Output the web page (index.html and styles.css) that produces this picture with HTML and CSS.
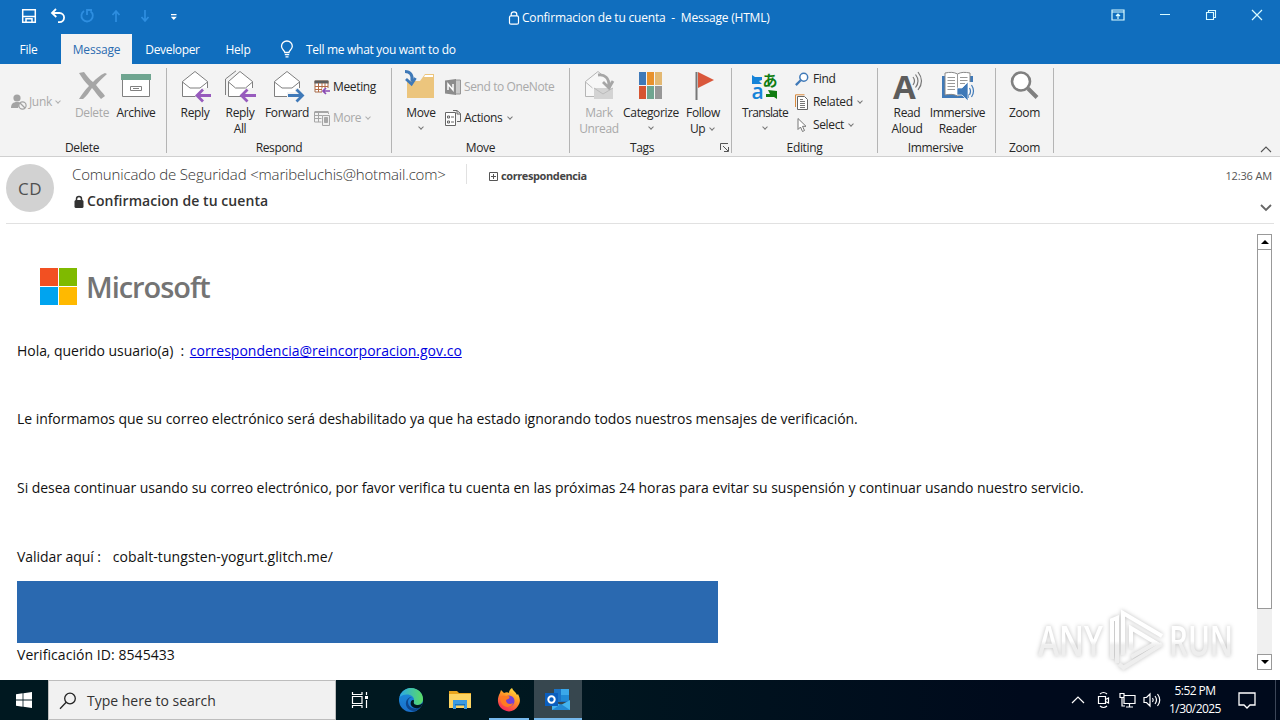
FILE: index.html
```html
<!DOCTYPE html>
<html lang="es">
<head>
<meta charset="utf-8">
<title>Confirmacion de tu cuenta - Message (HTML)</title>
<link rel="stylesheet" href="styles.css">
</head>
<body>
<header class="titlebar">
  <div class="quick">
    <svg viewBox="0 0 16 16" width="16" height="16" fill="none" stroke="#fff" stroke-width="1.5"><path d="M1.700 1.700h12.600v12.600H1.700zM1.700 8.500h12.600M5 14v-3.300h6V14"/></svg>
    <svg viewBox="0 0 16 16" width="16" height="16" fill="none" stroke="#fff" stroke-width="1.8"><path d="M6 1L2 5l4.300 4M2 5h7.500a4.600 4.600 0 1 1 0 9.200H8"/></svg>
    <svg viewBox="0 0 16 16" width="16" height="16" fill="none" stroke="#2e8ee0" stroke-width="1.800"><path d="M5 3a5.700 5.700 0 1 0 6.500.2M8 7V2h5"/></svg>
    <svg viewBox="0 0 16 16" width="16" height="16" fill="none" stroke="#2e8ee0" stroke-width="1.7"><path d="M8 14V3M4.500 7L8 3l3.500 4"/></svg>
    <svg viewBox="0 0 16 16" width="16" height="16" fill="none" stroke="#2e8ee0" stroke-width="1.7"><path d="M8 2v11M4.500 9L8 13l3.500-4"/></svg>
    <svg viewBox="0 0 16 16" width="16" height="16"><path d="M5 6h5.500v1.200H5zM4.800 8.800h6L7.800 12z" fill="#fff"/></svg>
  </div>
  <div class="caption">
    <svg viewBox="0 0 12 14" width="12" height="14" fill="none" stroke="#fff" stroke-width="1.200"><path d="M3.200 5V3.500a2.800 2.600 0 0 1 5.600 0V5"/><rect x="1.500" y="4.800" width="9" height="8.400" rx="1.500"/></svg><span>Confirmacion de tu cuenta&nbsp; -&nbsp; Message (HTML)</span>
  </div>
  <div class="winbtns">
    <svg viewBox="0 0 14 12" width="14" height="12" fill="none" stroke="#d9fbff" stroke-width="1.200"><path d="M1 1h12v10H1zM1 3h12M7 10V5M5 7l2-2 2 2"/></svg>
    <svg viewBox="0 0 12 12" width="12" height="12" stroke="#d9fbff"><path d="M1 5.500h10"/></svg>
    <svg viewBox="0 0 12 12" width="12" height="12" fill="none" stroke="#d9fbff" stroke-width="1.100"><path d="M1.500 3.500h7v7h-7zM3.500 3.500V1.500h7v7h-2"/></svg>
    <svg viewBox="0 0 12 12" width="12" height="12" fill="none" stroke="#d9fbff" stroke-width="1.200"><path d="M1 1l10 10M11 1L1 11"/></svg>
  </div>
</header>

<nav class="tabs">
  <a class="tab file">File</a>
  <a class="tab active">Message</a>
  <a class="tab dev">Developer</a>
  <a class="tab help">Help</a>
  <a class="tell">
    <svg viewBox="0 0 14 18" width="14" height="18" fill="none" stroke="#fff" stroke-width="1.300"><path d="M4.800 12.500c0-2-3.300-2.900-3.300-6.200a5.400 5.300 0 0 1 10.800 0c0 3.300-3.300 4.200-3.300 6.200zM4.800 14.700h4.400M5.500 16.800h3"/></svg>
    <span>Tell me what you want to do</span>
  </a>
</nav>

<section class="ribbon">
  <div class="group g-delete">
    <div class="tools">
      <div class="stack junk"><span class="row off">
        <svg viewBox="0 0 16 16" width="16" height="16"><circle cx="6" cy="4" r="3.600" fill="#a3a3a3"/><path d="M0 14c0-4 2-6 6-6 2 0 3 .5 3.500 1L7 14z" fill="#a3a3a3"/><circle cx="11.500" cy="11.500" r="3.600" fill="#f3f3f3" stroke="#a3a3a3" stroke-width="1.200"/><path d="M9 9l5 5" stroke="#a3a3a3" stroke-width="1.200"/></svg>
        Junk <i class="chev"></i></span></div>
      <div class="tool off w-del"><svg viewBox="0 0 32 32" width="32" height="32" fill="#a6a6a6"><path d="M3 3l5-1c3 4 6 8 9 10 3-3 7-7 12-9l2 1c-4 4-8 7-11 11 3 4 7 8 9 11l-4 3c-4-4-6-8-9-11-3 4-5 8-9 11H3c3-5 6-9 10-13C9 12 6 8 3 3z"/></svg><span>Delete</span></div>
      <div class="tool w-arc"><svg viewBox="0 0 32 32" width="32" height="32"><path d="M2.500 9h27v17.500h-27z" fill="#fff" stroke="#808080"/><path d="M1 4h30v6H1z" fill="#6fa590"/><path d="M10.500 16.500h11v4h-11zM13 18.500h6" fill="none" stroke="#808080"/></svg><span>Archive</span></div>
    </div>
    <div class="glabel">Delete</div>
  </div>

  <div class="group g-respond">
    <div class="tools">
      <div class="tool w-rep"><svg viewBox="0 0 32 32" width="32" height="32"><path d="M3.500 11.500L16 1.500l12.500 10v15h-25z" fill="#fff" stroke="#7f7f7f"/><path d="M3.500 12l7.500 6h10l7.500-6" fill="none" stroke="#7f7f7f"/><path d="M16 26.500L23 21v-3h8v12h-8z" fill="#f3f3f3"/><path d="M32 25.500H18.500M24 19.500l-6 6 6 6" fill="none" stroke="#975bbd" stroke-width="2.800"/></svg><span>Reply</span></div>
      <div class="tool w-all"><svg viewBox="0 0 32 32" width="32" height="32"><path d="M1.500 25V9L12 .8" fill="none" stroke="#7f7f7f"/><path d="M4.500 11.500L16 1.500l12.500 10v15h-24z" fill="#fff" stroke="#7f7f7f"/><path d="M4.500 12l7 6h10l7-6" fill="none" stroke="#7f7f7f"/><path d="M17 26.500L22 21v-3h9v12h-9z" fill="#f3f3f3"/><path d="M32 25.500H18M23.500 19.500l-6 6 6 6" fill="none" stroke="#975bbd" stroke-width="2.800"/></svg><span>Reply<br>All</span></div>
      <div class="tool w-fwd"><svg viewBox="0 0 32 32" width="32" height="32"><path d="M3.500 11.500L16 1.500l12.500 10v15h-25z" fill="#fff" stroke="#7f7f7f"/><path d="M3.500 12l7.500 6h10l7.500-6" fill="none" stroke="#7f7f7f"/><path d="M16 22h8v-4h7v12h-8l-1-2h-6z" fill="#f3f3f3"/><path d="M17 25.500h14M25.500 19.500l6 6-6 6" fill="none" stroke="#3f79b8" stroke-width="2.800"/></svg><span>Forward</span></div>
      <div class="stack wide">
        <span class="row"><svg viewBox="0 0 16 16" width="16" height="16"><path d="M1 2h13v11H1z" fill="#fff" stroke="#a66a48"/><path d="M.5 1.500h14v3H.5z" fill="#5c5c5c"/><path d="M1 7.500h13M1 10.500h8M4.500 4v9M8 4v9M11 4v5" stroke="#b56b45"/><path d="M8 9h8v6H8z" fill="#f3f3f3"/><path d="M16 12H9.500M12 9l-3 3 3 3" fill="none" stroke="#8949b3" stroke-width="1.700"/></svg>Meeting</span>
        <span class="row off"><svg viewBox="0 0 16 16" width="16" height="16" fill="none" stroke="#a6a6a6"><path d="M.5 2.500h14V4M.5 2v10h7M.5 5.500h8M.5 8.500h7M4.500 3v9M.5 1.500h14" /><path d="M8.500 5.500h7v10h-7z" fill="#eee"/><path d="M10.500 7.500h3v5h-3z" fill="#a6a6a6"/></svg>More <i class="chev"></i></span>
      </div>
    </div>
    <div class="glabel">Respond</div>
  </div>

  <div class="group g-move">
    <div class="tools">
      <div class="tool w-move"><svg viewBox="0 0 32 32" width="32" height="32"><path d="M2 11h13l5-7h9v24H2z" fill="#ecc57d"/><path d="M20 5h8v2h-9z" fill="#fff"/><path d="M0 1.500c5 0 8 3 7 10" fill="none" stroke="#3f79b8" stroke-width="3"/><path d="M1 9l5.500 5 4-6" fill="none" stroke="#3f79b8" stroke-width="2.800"/></svg><span>Move<i class="chev below"></i></span></div>
      <div class="stack wide">
        <span class="row off"><svg viewBox="0 0 16 16" width="16" height="16"><path d="M10 1h5.500v14H10z" fill="#c9c9c9" stroke="#969696"/><path d="M0 1.500L11 0v16L0 14.500z" fill="#8c8c8c"/><path d="M3 11V5l5 6V5" fill="none" stroke="#fff" stroke-width="1.500"/></svg><span class="onenote">Send to OneNote</span></span>
        <span class="row"><svg viewBox="0 0 16 16" width="16" height="16" fill="none" stroke="#666"><path d="M.5 2.500h10v13H.5z" fill="#fff"/><path d="M2.500 6h2v2h-2zM2.500 11h2v2h-2zM6 7h3M6 12h3M8 .5h4l3.500 3v8H12"/><path d="M12 1v3h3"/></svg>Actions <i class="chev"></i></span>
      </div>
    </div>
    <div class="glabel">Move</div>
  </div>

  <div class="group g-tags">
    <div class="tools">
      <div class="tool off w-mark"><svg viewBox="0 0 32 32" width="32" height="32"><path d="M2.500 11.500L15 1.500l12 10v15h-24.500z" fill="#f7f7f7" stroke="#b5b5b5"/><path d="M11 18h19v11H11z" fill="#d3d3d3"/><path d="M2.500 12l7 6M11 18l9 6 10-6" fill="none" stroke="#bbb"/><path d="M15 5c7-1 11 3 11 11M20 12l6 6 4-7" fill="none" stroke="#a6a6a6" stroke-width="2.800"/></svg><span>Mark<br>Unread</span></div>
      <div class="tool w-cat"><svg viewBox="0 0 32 32" width="32" height="32"><path d="M4 2h7v13H4z" fill="#3f79b8"/><path d="M12 2h7v13h-7z" fill="#e8912d"/><path d="M20 2h7v13h-7z" fill="#e3b872"/><path d="M4 16h7v13H4z" fill="#d65532"/><path d="M12 16h7v13h-7z" fill="#6fa590"/><path d="M20 16h7v13h-7z" fill="#979797"/></svg><span>Categorize<i class="chev below"></i></span></div>
      <div class="tool w-flw"><svg viewBox="0 0 32 32" width="32" height="32"><path d="M9.500 2v28" stroke="#777" stroke-width="2"/><path d="M11 2l16 8-16 8z" fill="#d9573b"/></svg><span>Follow<br>Up <i class="chev"></i></span></div>
    </div>
    <div class="glabel">Tags</div>
    <svg class="launcher" viewBox="0 0 9 9" width="9" height="9" fill="none" stroke="#555"><path d="M.5 7V.5H8M3 3l5 5M8.500 4v4.500H4"/></svg>
  </div>

  <div class="group g-edit">
    <div class="tools">
      <div class="tool w-tr"><svg viewBox="0 0 32 32" width="32" height="32"><path d="M3 5l3 2h7v3l-3 1 3 3H3z" fill="#1583d8"/><path d="M28 29l-3-2h-8v-3h4l-2-4 9 1z" fill="#107c10"/><text x="2.500" y="29" class="ico-a">a</text><text x="13.500" y="15.500" class="ico-jp">あ</text></svg><span>Translate<i class="chev below"></i></span></div>
      <div class="stack tight">
        <span class="row"><svg viewBox="0 0 16 16" width="14" height="14" fill="none" stroke="#3f79b8"><circle cx="10" cy="6" r="4.500" stroke-width="1.700" fill="#fff"/><path d="M6.500 9.500L1 15" stroke-width="2.600"/></svg>Find</span>
        <span class="row"><svg viewBox="0 0 14 16" width="14" height="16" fill="none"><path d="M.5 13V.8h9" stroke="#d98a3c"/><path d="M2.500 2.500h7l3 3v10h-10z" fill="#fff" stroke="#666"/><path d="M5 7.500h5M5 9.500h5M5 11.500h5M5 13.500h5M5 5.500h3" stroke="#666" stroke-width=".9"/></svg>Related <i class="chev"></i></span>
        <span class="row"><svg viewBox="0 0 14 16" width="14" height="16"><path d="M3 1.500v11l2.500-2.500 2 4.500 2-1-2-4.200H11z" fill="#fff" stroke="#777"/></svg>Select <i class="chev"></i></span>
      </div>
    </div>
    <div class="glabel">Editing</div>
  </div>

  <div class="group g-imm">
    <div class="tools">
      <div class="tool w-read"><svg viewBox="0 0 32 32" width="32" height="32"><text x="2" y="29" class="ico-read">A</text><path d="M22 7q3 4 0 8M24.500 4.500q5 6.500 0 13M27 2q7 9 0 18" fill="none" stroke="#777" stroke-width="1.200"/></svg><span>Read<br>Aloud</span></div>
      <div class="tool w-immr"><svg viewBox="0 0 32 32" width="32" height="32"><path d="M0 6h31v22H0z" fill="#3f79b8"/><path d="M3 3c5-1 9-1 12.500 1C19 2 23 2 28 3v22c-5-1-9-1-12.500 1C12 24 8 24 3 25z" fill="#fff" stroke="#888"/><path d="M15.500 4v22M5.500 7.500H13M5.500 10.500H13M5.500 13.500H13M5.500 16.500H13M5.500 19.500H13M18 7.500h7.500M18 10.500h7.500M18 13.500h5" stroke="#999" fill="none"/><path d="M27 12h5v18h-5z" fill="#f3f3f3"/><path d="M15 18h5l6-6v19l-6-6h-5z" fill="#3f79b8" stroke="#fff" stroke-width=".7"/><path d="M27.500 18q2 3 0 7M29.500 15q4 6 0 12" fill="none" stroke="#3f79b8" stroke-width="1.200"/></svg><span>Immersive<br>Reader</span></div>
    </div>
    <div class="glabel imml">Immersive</div>
  </div>

  <div class="group g-zoom">
    <div class="tools">
      <div class="tool w-zoom"><svg viewBox="0 0 32 32" width="32" height="32"><circle cx="12" cy="11.500" r="9" fill="#fff" stroke="#808080" stroke-width="2.600"/><path d="M19 18.500l9 9" stroke="#808080" stroke-width="4"/></svg><span>Zoom</span></div>
    </div>
    <div class="glabel">Zoom</div>
  </div>
  <svg class="collapse" viewBox="0 0 12 7" width="12" height="7" fill="none" stroke="#555" stroke-width="1.100"><path d="M1 6l5-5 5 5"/></svg>
</section>

<section class="msghead">
  <div class="avatar">CD</div>
  <div class="who">
    <div class="fromline"><span class="from">Comunicado de Seguridad &lt;maribeluchis@hotmail.com&gt;</span>
      <span class="to"><svg viewBox="0 0 9 9" width="9" height="9" fill="none" stroke="#555"><path d="M.5.5h8v8h-8zM2 4.500h5M4.500 2v5"/></svg>correspondencia</span></div>
    <div class="subject"><svg viewBox="0 0 10 13" width="10" height="13"><path d="M2.500 6V4a2.500 2.500 0 0 1 5 0v2" fill="none" stroke="#333" stroke-width="1.500"/><rect x=".5" y="5" width="9" height="8" rx="1.500" fill="#333"/></svg>Confirmacion de tu cuenta</div>
  </div>
  <div class="when"><span>12:36 AM</span><svg viewBox="0 0 12 8" width="12" height="8" fill="none" stroke="#666" stroke-width="1.800"><path d="M1 1l5 5 5-5"/></svg></div>
</section>

<main class="reader">
  <article class="mail">
    <div class="brand">
      <div class="tiles"><i class="t1"></i><i class="t2"></i><i class="t3"></i><i class="t4"></i></div>
      <span>Microsoft</span>
    </div>
    <p class="p1">Hola, querido usuario(a)&nbsp; : <a>correspondencia@reincorporacion.gov.co</a></p>
    <p class="p2">Le informamos que su correo electrónico será deshabilitado ya que ha estado ignorando todos nuestros mensajes de verificación.</p>
    <p class="p3">Si desea continuar usando su correo electrónico, por favor verifica tu cuenta en las próximas 24 horas para evitar su suspensión y continuar usando nuestro servicio.</p>
    <p class="p4">Validar aquí :&nbsp;&nbsp; <span>cobalt-tungsten-yogurt.glitch.me/</span></p>
    <div class="block"></div>
    <p class="vid">Verificación ID: 8545433</p>
  </article>
  <div class="scroll">
    <div class="sbtn"><svg viewBox="0 0 8 4" width="8" height="4"><path d="M0 4l4-4 4 4z"/></svg></div>
    <div class="thumb"></div>
    <div class="sbtn end"><svg viewBox="0 0 8 4" width="8" height="4"><path d="M0 0l4 4 4-4z"/></svg></div>
  </div>
  <svg class="watermark" viewBox="0 0 204 74" width="204" height="74">
    <defs><linearGradient id="wg" x1="0" y1="10" x2="0" y2="62" gradientUnits="userSpaceOnUse"><stop offset=".48" stop-color="#fff"/><stop offset=".56" stop-color="#eeeeee"/></linearGradient></defs>
    <g class="wm">
      <text x="6" y="50" textLength="65" lengthAdjust="spacingAndGlyphs" fill="url(#wg)">ANY</text>
      <text x="137" y="50" textLength="64" lengthAdjust="spacingAndGlyphs" fill="url(#wg)">RUN</text>
      <path stroke="url(#wg)" d="M80 53V14l5-2v45M91 49V7l39 23M99 43V22l25 15-25 14M91 62l39-24M87 58l6 5"/>
    </g>
  </svg>
</main>

<footer class="taskbar">
  <div class="start"><svg viewBox="0 0 16 16" width="16" height="16" fill="#fff"><path d="M0 2.200l6.600-.9v6.300H0zM7.400 1.200L16 0v7.600H7.400zM0 8.400h6.600v6.300L0 13.800zM7.400 8.400H16V16l-8.600-1.200z"/></svg></div>
  <div class="search"><svg viewBox="0 0 18 18" width="18" height="18" fill="none" stroke="#222" stroke-width="1.300"><circle cx="11" cy="6.500" r="5.300"/><path d="M7.200 10.300L1 16.700"/></svg><span>Type here to search</span></div>
  <div class="app"><svg viewBox="0 0 18 18" width="18" height="18" fill="none" stroke="#fff" stroke-width="1.200"><path d="M1.500 1v2.500h9.500V1M1.500 17v-2.500h9.500V17M1.500 5.500H11v7H1.500zM15.500 1v3M15.500 9v8"/><path d="M14 5h3v3h-3z" fill="#fff" stroke="none"/></svg></div>
  <div class="app edge"><svg viewBox="0 0 24 24" width="24" height="24">
    <defs><linearGradient id="eg" x1="0" x2="1"><stop offset="0" stop-color="#2aa8e8"/><stop offset="1" stop-color="#5bdc63"/></linearGradient><linearGradient id="eb" x1="0" y1="0" x2="0" y2="1"><stop offset="0" stop-color="#1b8fdc"/><stop offset="1" stop-color="#1a6fcb"/></linearGradient></defs>
    <circle cx="12" cy="12" r="12" fill="url(#eb)"/><path d="M.5 9C3 2 8 0 12 0c7 0 12 5 12 11 0 4-3 6-6 6-4 0-4-2-3-4 1-6-8-9-14.500-4z" fill="url(#eg)"/><path d="M13 9c-4 1-5 5-3 8.500 2 3 6 4 11 2-1 1-3 3-5 3.800C10 23 6 19 7 14c.5-3 3-5 6-5z" fill="#0d478f"/><path d="M15 13c-1 3 1 4 4 4 2 0 3.500-1 4.400-2-.4 2-1.300 3.500-2.400 4.500-5 2-11-1-9-6 1-2 3-2 3-.5z" fill="#001722"/></svg></div>
  <div class="app"><svg viewBox="0 0 24 20" width="24" height="20"><path d="M1 1h8l2 2h12v3H1z" fill="#e8a51d"/><path d="M1 4h22v14H1z" fill="#fcd462"/><path d="M5 10h14v9h-3v-4H8v4H5z" fill="#3b9be0"/><path d="M7 14h10v1.500H7z" fill="#1773bd"/></svg></div>
  <div class="app run"><svg viewBox="0 0 24 24" width="24" height="24">
    <defs><linearGradient id="ff" x1=".8" y1="0" x2=".3" y2="1"><stop offset="0" stop-color="#ffe33f"/><stop offset=".45" stop-color="#ff9326"/><stop offset="1" stop-color="#f5245c"/></linearGradient></defs>
    <path d="M3 5l1-3 3 3c2-1 4-1 5 0 0-2 1-4 3-5 1 3 4 4 5 7l1-1c2 4 3 8 0 12-3 5-9 7-14 4C1 19-1 12 3 5z" fill="url(#ff)"/><circle cx="12" cy="13" r="5.500" fill="#7140d8"/><path d="M3 9c3-2 5-1 8-1 2 0 2 2 0 3l-2 1c0 4 4 5 7 3-1 5-8 5-11 1-1-2-2-4-2-7z" fill="#ff7a22"/></svg></div>
  <div class="app run on"><svg viewBox="0 0 26 24" width="26" height="24"><path d="M9 1h15v13H9z" fill="#1a73c7"/><path d="M16 1h8v6h-8z" fill="#3aa8ea"/><path d="M16 7h8v6h-8z" fill="#1f8ad6"/><path d="M7 13l9 4 9-5v10H7z" fill="#43b3ee"/><path d="M7 22l9-6 9 6z" fill="#2389d4"/><path d="M0 5h13v13H0z" fill="#0a5ebe"/><circle cx="6.500" cy="11.500" r="3.200" fill="none" stroke="#fff" stroke-width="2"/></svg></div>
  <div class="tray">
    <svg viewBox="0 0 14 8" width="14" height="8" fill="none" stroke="#fff" stroke-width="1.200"><path d="M1 7l6-6 6 6"/></svg>
    <svg class="meet" viewBox="0 0 14 18" width="14" height="18" fill="none" stroke="#fff" stroke-width="1.200"><path d="M1.500 5.500h7v7h-7zM8.500 8.500l3-1.500v5l-3-1.500M3 3q3.500-3 7 0M3 15q3.500 3 7 0"/></svg>
    <svg class="net" viewBox="0 0 17 16" width="17" height="16" fill="none" stroke="#fff" stroke-width="1.200"><path d="M5 3.500h11v8H5zM10.500 11.500V15M7 15h7M1 1.500h4v4H1zM3 5.500V14h3"/></svg>
    <svg class="vol" viewBox="0 0 18 16" width="18" height="16" fill="none" stroke="#fff" stroke-width="1.200"><path d="M1 5.500h2.500L7 2v12l-3.500-3.500H1zM9.500 6q1.500 2 0 4M12 4q3 4 0 8M14.500 2q4.500 6 0 12"/></svg>
    <div class="clock">5:52 PM<br>1/30/2025</div>
    <svg class="note" viewBox="0 0 18 17" width="18" height="17" fill="none" stroke="#fff" stroke-width="1.300"><path d="M1 1h16v12h-5l-3 3-3-3H1z"/></svg>
    <i class="peek"></i>
  </div>
</footer>
</body>
</html>
```
FILE: styles.css
```css
* { box-sizing: border-box; }
body {
  margin: 0; width: 1280px; height: 720px; overflow: hidden;
  display: flex; flex-direction: column;
  background: #fff; color: #262626;
  font: 12px/16px "Open Sans", "Noto Sans", sans-serif;
  letter-spacing: -0.2px;
}
svg { display: block; flex: none; overflow: visible; }
p { margin: 0; }

/* Title bar */
.titlebar { height: 34px; flex: none; background: #106ebe; color: #fff; display: flex; justify-content: space-between; position: relative; }
.quick { display: flex; gap: 13px; padding: 8px 0 0 21px; }
.caption { position: absolute; left: 508px; top: 10px; display: flex; align-items: center; gap: 2px; white-space: nowrap; }
.winbtns { display: flex; align-items: center; gap: 34px; padding: 0 17px 4px 0; }

/* Ribbon tabs */
.tabs { height: 30px; flex: none; background: #106ebe; color: #fff; display: flex; line-height: 31px; }
.tab { text-align: center; }
.file { width: 61px; padding-right: 4px; }
.active { width: 71px; background: #f3f3f3; color: #2b6cb0; }
.dev { width: 81px; letter-spacing: -0.35px; }
.help { width: 50px; }
.tell { display: flex; align-items: center; gap: 12px; padding-left: 17px; letter-spacing: -0.3px; }

/* Ribbon */
.ribbon { height: 93px; flex: none; background: #f3f3f3; border-bottom: 1px solid #d0d0d0; display: flex; position: relative; padding-top: 4px; }
.group { height: 85px; border-right: 1px solid #b4b4b4; display: flex; flex-direction: column; position: relative; letter-spacing: -0.35px; }
.g-delete { width: 167px; }
.g-respond { width: 225px; }
.g-move { width: 178px; }
.g-tags { width: 162px; }
.g-edit { width: 146px; }
.g-imm { width: 118px; }
.g-zoom { width: 58px; }
.tools { display: flex; height: 72px; flex: none; }
.g-respond .tools { padding-left: 5px; }
.g-move .tools { padding-left: 8px; }
.g-tags .tools { padding-left: 7px; }
.g-edit .tools, .g-imm .tools { padding-left: 8px; }
.glabel { text-align: center; line-height: 16px; }
.g-tags .glabel { padding-right: 17px; }
.g-delete .glabel { padding-right: 2px; }
.imml { padding-right: 2px; }
.tool { display: flex; flex-direction: column; align-items: center; padding-top: 2px; text-align: center; white-space: nowrap; }
.tool span { margin-top: 3px; line-height: 16px; }
.w-del { width: 48px; }
.w-arc { width: 40px; }
.w-rep { width: 46px; }
.w-all { width: 44px; }
.w-fwd { width: 50px; }
.w-move { width: 42px; }
.w-mark { width: 44px; }
.w-cat { width: 60px; }
.w-flw { width: 44px; }
.w-tr { width: 50px; letter-spacing: -0.65px; }
.w-read { width: 42px; }
.w-immr { width: 59px; }
.w-zoom { width: 57px; }
.off { color: #a9a9a9; }
.stack { display: flex; flex-direction: column; }
.stack.junk { width: 68px; padding: 26px 0 0 11px; }
.stack.wide { padding: 11px 0 0 3px; gap: 15px; }
.stack.tight { padding: 3px 0 0 5px; gap: 7px; }
.g-respond .wide { padding-left: 2px; }
.row { display: flex; align-items: center; gap: 3px; height: 16px; white-space: nowrap; }
.junk .row { gap: 2px; }
.tight .row { gap: 4px; }
.tight .chev { margin-left: 1px; }
.onenote { letter-spacing: -0.4px; }
.chev { display: inline-block; width: 4px; height: 4px; border: solid #777; border-width: 0 1px 1px 0; transform: rotate(45deg); margin: 0 2px 3px 2px; }
.off .chev { border-color: #b0b0b0; }
.chev.below { display: block; margin: 4px auto 0; }
.launcher { position: absolute; right: 2px; bottom: 1px; }
.collapse { position: absolute; right: 8px; bottom: 3px; }
.ico-a { font: 600 21px "Open Sans", sans-serif; fill: #1583d8; letter-spacing: 0; }
.ico-jp { font: 700 15px "Noto Sans CJK JP", sans-serif; fill: #107c10; letter-spacing: 0; }
.ico-read { font: 700 33px "Open Sans", sans-serif; fill: #5c5c5c; letter-spacing: 0; }

/* Message header */
.msghead { height: 67px; flex: none; margin: 0 6px; border-bottom: 1px solid #e1e1e1; display: flex; padding-top: 7px; color: #555; }
.avatar { width: 48px; height: 48px; border-radius: 50%; background: #d2d2d2; text-align: center; font-size: 17px; line-height: 49px; color: #505050; letter-spacing: 0.5px; }
.who { padding-left: 18px; flex: 1; }
.fromline { display: flex; height: 22px; }
.from { width: 395px; height: 20px; border-right: 1px solid #e1e1e1; font-size: 15px; font-weight: 300; line-height: 21px; letter-spacing: -0.17px; white-space: nowrap; color: #333; }
.to { display: flex; align-items: center; gap: 3px; padding: 2px 0 0 22px; font-size: 11px; font-weight: 700; letter-spacing: -0.4px; color: #444; }
.subject { display: flex; align-items: center; gap: 3px; margin: 5px 0 0 2px; font-size: 14px; font-weight: 600; line-height: 20px; letter-spacing: .06px; color: #333; }
.when { display: flex; flex-direction: column; align-items: flex-end; font-size: 11px; padding: 4px 2px 0 0; gap: 20px; letter-spacing: -0.15px; }

/* Message body */
.reader { height: 456px; flex: none; display: flex; justify-content: space-between; position: relative; padding: 10px 8px 9px 17px; background: #fff; }
.mail { color: #111; font-size: 14px; line-height: 20px; letter-spacing: -0.05px; white-space: nowrap; }
.brand { display: flex; align-items: center; gap: 9px; height: 37px; margin: 34px 0 0 23px; color: #747474; font-size: 29px; font-weight: 600; letter-spacing: -1.05px; }
.tiles { display: grid; grid-template-columns: 18px 18px; grid-template-rows: 18px 18px; gap: 1px; }
.t1 { background: #f25022; }
.t2 { background: #7fba00; }
.t3 { background: #00a4ef; }
.t4 { background: #ffb900; }
.p1 { margin-top: 36px; }
.p1 a { color: #0000e0; text-decoration: underline; margin-left: 2px; letter-spacing: 0; }
.p2 { margin-top: 48px; }
.p3 { margin-top: 49px; }
.p4 { margin-top: 49px; }
.p4 span { margin-left: 1px; letter-spacing: 0.08px; }
.block { width: 701px; height: 62px; margin-top: 14px; background: #2a69b0; }
.vid { margin-top: 2px; letter-spacing: 0.06px; }
.scroll { width: 15px; height: 436px; background: #f0f0f0; display: flex; flex-direction: column; }
.sbtn { height: 16px; flex: none; border: 1px solid #999; background: #fff; display: flex; align-items: center; justify-content: center; }
.thumb { height: 360px; flex: none; margin-top: -1px; border: 1px solid #999; background: #fff; }
.end { margin-top: auto; }
.watermark { position: absolute; left: 1032px; top: 382px; }
.wm { filter: drop-shadow(0 0 2px rgba(0, 0, 0, .25)); }
.wm text { font: 600 42px "Open Sans", sans-serif; letter-spacing: 0; }
.wm path { fill: none; stroke-width: 4; }

/* Taskbar */
.taskbar { height: 40px; flex: none; display: flex; background: linear-gradient(90deg, #001820 40%, #000a1c 80%); }
.start { width: 48px; display: flex; align-items: center; justify-content: center; }
.search { width: 288px; background: #f1f1f1; border: 1px solid #bdbdbd; display: flex; align-items: center; gap: 10px; padding: 1px 0 0 10px; font-size: 14px; color: #333; letter-spacing: 0; }
.app { width: 48px; display: flex; align-items: center; justify-content: center; }
.edge { margin-left: 3px; }
.app + .app:not(.edge) { margin-left: 1px; }
.app.run:not(.on) { margin: 0 5px !important; width: 40px; }
.app.run.on { margin-left: 0 !important; }
.run { box-shadow: inset 0 -2px #76b9ed; }
.on { background: #37474f; }
.tray { margin-left: auto; display: flex; align-items: center; color: #fff; padding-right: 4px; }
.meet { margin-left: 12px; }
.net { margin-left: 8px; }
.vol { margin-left: 7px; }
.clock { width: 60px; margin-left: 4px; text-align: center; font-size: 12px; line-height: 18px; letter-spacing: -0.55px; }
.note { margin-left: 13px; }
.peek { width: 1px; height: 40px; margin-left: 19px; background: #3c4658; }
```
